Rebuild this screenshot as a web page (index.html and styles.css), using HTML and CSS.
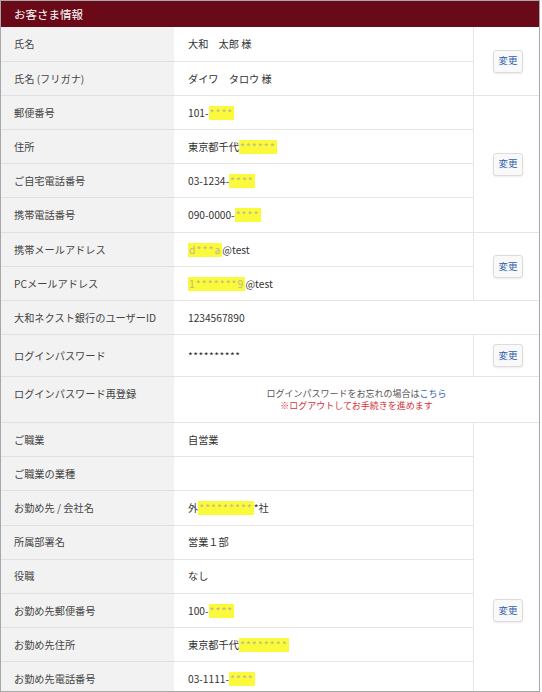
FILE: index.html
```html
<!DOCTYPE html>
<html lang="ja">
<head>
<meta charset="utf-8">
<title>お客さま情報</title>
<link rel="stylesheet" href="styles.css">
</head>
<body>
<div class="frame">
  <div class="header">お客さま情報</div>
  <div class="grid">
    <div class="cell label">氏名</div>
    <div class="cell value">大和　太郎 様</div>
    <div class="cell act span2"><button class="btn">変更</button></div>
    <div class="cell label">氏名 (フリガナ)</div>
    <div class="cell value">ダイワ　タロウ 様</div>

    <div class="cell label">郵便番号</div>
    <div class="cell value">101-<span class="mask">****</span></div>
    <div class="cell act span4"><button class="btn">変更</button></div>
    <div class="cell label">住所</div>
    <div class="cell value">東京都千代<span class="mask">******</span></div>
    <div class="cell label">ご自宅電話番号</div>
    <div class="cell value">03-1234-<span class="mask">****</span></div>
    <div class="cell label">携帯電話番号</div>
    <div class="cell value">090-0000-<span class="mask">****</span></div>

    <div class="cell label">携帯メールアドレス</div>
    <div class="cell value"><span class="mask">d***a</span>@test</div>
    <div class="cell act span2"><button class="btn">変更</button></div>
    <div class="cell label">PCメールアドレス</div>
    <div class="cell value"><span class="mask">1*******9</span>@test</div>

    <div class="cell label">大和ネクスト銀行のユーザーID</div>
    <div class="cell value wide">1234567890</div>

    <div class="cell label">ログインパスワード</div>
    <div class="cell value"><span class="pw">**********</span></div>
    <div class="cell act"><button class="btn">変更</button></div>

    <div class="cell label label-top">ログインパスワード再登録</div>
    <div class="cell note wide">
      <span class="note-line">ログインパスワードをお忘れの場合は<a class="link" href="#">こちら</a></span>
      <span class="note-warn">※ログアウトしてお手続きを進めます</span>
    </div>

    <div class="cell label">ご職業</div>
    <div class="cell value">自営業</div>
    <div class="cell act span11"><button class="btn">変更</button></div>
    <div class="cell label">ご職業の業種</div>
    <div class="cell value"></div>
    <div class="cell label">お勤め先 / 会社名</div>
    <div class="cell value">外<span class="mask">*********</span>*社</div>
    <div class="cell label">所属部署名</div>
    <div class="cell value">営業１部</div>
    <div class="cell label">役職</div>
    <div class="cell value">なし</div>
    <div class="cell label">お勤め先郵便番号</div>
    <div class="cell value">100-<span class="mask">****</span></div>
    <div class="cell label">お勤め先住所</div>
    <div class="cell value">東京都千代<span class="mask">********</span></div>
    <div class="cell label">お勤め先電話番号</div>
    <div class="cell value">03-1111-<span class="mask">****</span></div>
    <div class="cell label"></div>
    <div class="cell value"></div>
    <div class="cell label"></div>
    <div class="cell value"></div>
    <div class="cell label"></div>
    <div class="cell value"></div>
  </div>
</div>
</body>
</html>
```
FILE: styles.css
```css
html, body {
  margin: 0;
  padding: 0;
  background: #ffffff;
}

body {
  font-family: "Noto Sans CJK JP", "Noto Sans", sans-serif;
  color: #333333;
}

.frame {
  width: 538px;
  height: 690px;
  border: 1px solid #a8a8a8;
  overflow: hidden;
}

.header {
  height: 26px;
  background: #6a0a19;
  color: #ffffff;
  font-size: 11.5px;
  display: flex;
  align-items: center;
  padding-left: 13px;
}

.grid {
  display: grid;
  grid-template-columns: 173px 299px 66px;
  grid-template-rows: 35px 34px 34px 34px 34px 35px 34px 34px 34px 42px 46px;
  grid-auto-rows: 34.2px;
}

.cell {
  display: flex;
  align-items: center;
  border-bottom: 1px solid #e5e5e5;
  font-size: 10.2px;
  line-height: 14px;
  white-space: nowrap;
}

.label {
  grid-column: 1;
  background: #f2f2f2;
  padding-left: 13px;
  color: #444444;
  border-bottom-color: #e0e0e0;
}

.label-top {
  align-items: flex-start;
  padding-top: 10px;
}

.value {
  grid-column: 2;
  padding-left: 14px;
  color: #333333;
}

.wide {
  grid-column: 2 / span 2;
}

.act {
  grid-column: 3;
  justify-content: center;
  border-left: 1px solid #e6e6e6;
}

.span2 { grid-row: span 2; }
.span4 { grid-row: span 4; }
.span11 { grid-row: span 11; }

.btn {
  width: 30px;
  height: 23px;
  margin-left: 3px;
  padding: 0;
  border: 1px solid #dcdcdc;
  border-radius: 3px;
  background: #f9f9f9;
  box-shadow: 0 1px 2px rgba(0, 0, 0, 0.08);
  color: #2f5fb0;
  font-family: "Noto Sans CJK JP", sans-serif;
  font-size: 9.5px;
  line-height: 1;
}

.mask {
  display: inline-block;
  background: #fbf93c;
  color: #b9b98e;
  line-height: 13px;
  padding: 0 1px 1px 1px;
  letter-spacing: 1.2px;
}

.pw {
  letter-spacing: 0.5px;
  color: #333333;
}

.note {
  flex-direction: column;
  justify-content: center;
  font-size: 9px;
  line-height: 12px;
}

.note-line {
  color: #555555;
}

.link {
  color: #2f62b8;
  text-decoration: none;
}

.note-warn {
  color: #d3343e;
}
```
